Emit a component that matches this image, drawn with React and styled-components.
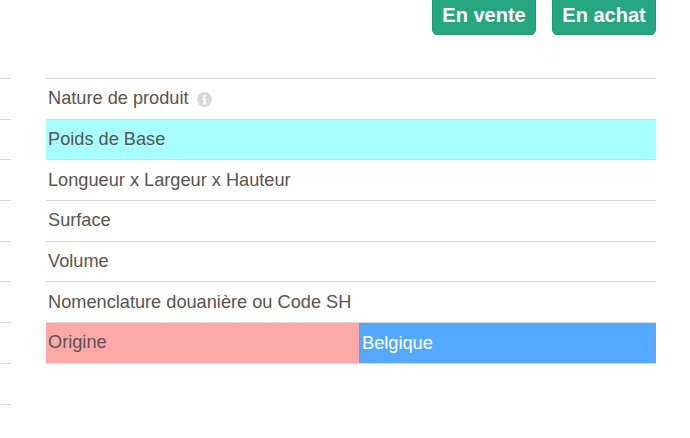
import styled, { createGlobalStyle } from "styled-components";

const rows = [
  { label: "Nature de produit", info: true },
  { label: "Poids de Base", tone: "#a8ffff" },
  { label: "Longueur x Largeur x Hauteur" },
  { label: "Surface" },
  { label: "Volume" },
  { label: "Nomenclature douanière ou Code SH" },
  { label: "Origine", tone: "#ffa8a8", value: "Belgique" },
];

export default function App() {
  return (
    <Page>
      <GlobalStyle />
      <Toolbar>
        <ActionButton>En vente</ActionButton>
        <ActionButton>En achat</ActionButton>
      </Toolbar>
      <Content>
        <SideColumn>
          {Array.from({ length: 8 }).map((_, i) => (
            <SideRow key={i} />
          ))}
        </SideColumn>
        <Table>
          {rows.map((row) => (
            <Row key={row.label} $split={!!row.value}>
              <LabelCell $tone={row.tone}>
                {row.label}
                {row.info && (
                  <InfoIcon viewBox="0 0 16 16">
                    <circle cx="8" cy="8" r="8" fill="#d9d9d9" />
                    <circle cx="8.1" cy="4.4" r="1.5" fill="#fff" />
                    <path d="M5.9 6.7h3.4v5h1v1.5H5.9v-1.5h1v-3.5h-1z" fill="#fff" />
                  </InfoIcon>
                )}
              </LabelCell>
              {row.value && <ValueCell>{row.value}</ValueCell>}
            </Row>
          ))}
        </Table>
      </Content>
    </Page>
  );
}

const GlobalStyle = createGlobalStyle`
  html, body {
    margin: 0;
    padding: 0;
    background: #fff;
    overflow: hidden;
  }
  * {
    box-sizing: border-box;
  }
`;

const Page = styled.div`
  width: 690px;
  height: 438px;
  overflow: hidden;
  font-family: "Liberation Sans", Arial, sans-serif;
`;

const Toolbar = styled.div`
  display: flex;
  justify-content: flex-end;
  gap: 16px;
  height: 78px;
  padding-right: 34px;
`;

const ActionButton = styled.button`
  width: 104px;
  height: 36px;
  margin-top: -1px;
  padding: 0 0 4px;
  border: 1px solid #1f9d78;
  border-radius: 0 0 5px 5px;
  background: #25a580;
  color: #fff;
  font-family: inherit;
  font-size: 20px;
  font-weight: 700;
`;

const Content = styled.div`
  display: flex;
  gap: 35px;
  padding-right: 34px;
`;

const SideColumn = styled.div`
  width: 11px;
  flex: none;
  border-top: 1px solid #d9d9d9;
`;

const SideRow = styled.div`
  height: 40.7px;
  border-bottom: 1px solid #d9d9d9;
`;

const Table = styled.div`
  flex: 1;
  border-top: 1px solid #d9d9d9;
`;

const Row = styled.div`
  display: grid;
  grid-template-columns: ${(p) => (p.$split ? "313px 1fr" : "1fr")};
  height: 40.7px;
  border-bottom: 1px solid #d9d9d9;
`;

const LabelCell = styled.div`
  display: flex;
  align-items: center;
  padding-left: 2px;
  background: ${(p) => p.$tone || "transparent"};
  color: #5b5350;
  font-size: 18.2px;
`;

const ValueCell = styled.div`
  display: flex;
  align-items: center;
  padding-left: 2px;
  border: 1px solid #5ba6f2;
  border-bottom: none;
  background: #55a8ff;
  color: #fff;
  font-size: 18.2px;
`;

const InfoIcon = styled.svg`
  width: 15px;
  height: 15px;
  margin-left: 8px;
  margin-top: 2px;
`;
